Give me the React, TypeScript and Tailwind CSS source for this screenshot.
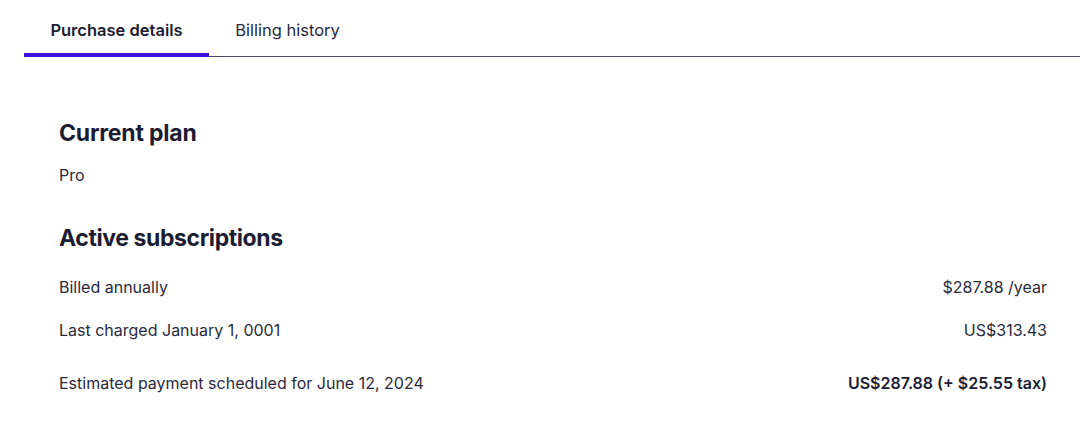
export default function App() {
  const font = { fontFamily: "Inter, 'Noto Sans', sans-serif" };
  return (
    <div className="w-[1080px] h-[427px] bg-white text-[#1c1c33]" style={font}>
      <div className="pl-6">
        <div className="flex border-b border-[#4b4b5c]">
          <div className="relative w-[185px] h-[56px] pt-[4px] flex items-center justify-center text-[16.5px] font-semibold">
            Purchase details
            <div className="absolute left-0 right-0 -bottom-px h-[4px] bg-[#3b12e0]" />
          </div>
          <div className="w-[157px] h-[56px] pt-[4px] flex items-center justify-center text-[16.5px] text-[#2a2a3d]">
            Billing history
          </div>
        </div>
      </div>
      <div className="px-[59px] pt-[62px] pr-[33px]">
        <h2 className="text-[23px] font-bold leading-[28px] tracking-[-0.2px]">Current plan</h2>
        <p className="mt-[18px] text-[16px] leading-[20px] text-[#2a2a3d]">Pro</p>
        <h2 className="mt-[39px] text-[23px] font-bold leading-[28px] tracking-[-0.4px]">Active subscriptions</h2>
        <div className="mt-[25px] flex justify-between text-[16px] leading-[20px] text-[#2a2a3d]">
          <span>Billed annually</span>
          <span>$287.88 /year</span>
        </div>
        <div className="mt-[23px] flex justify-between text-[16px] leading-[20px] text-[#2a2a3d]">
          <span>Last charged January 1, 0001</span>
          <span>US$313.43</span>
        </div>
        <div className="mt-[33px] flex justify-between text-[16px] leading-[20px] text-[#2a2a3d]">
          <span>Estimated payment scheduled for June 12, 2024</span>
          <span className="font-semibold text-[#1c1c33]">US$287.88 (+ $25.55 tax)</span>
        </div>
      </div>
    </div>
  );
}
